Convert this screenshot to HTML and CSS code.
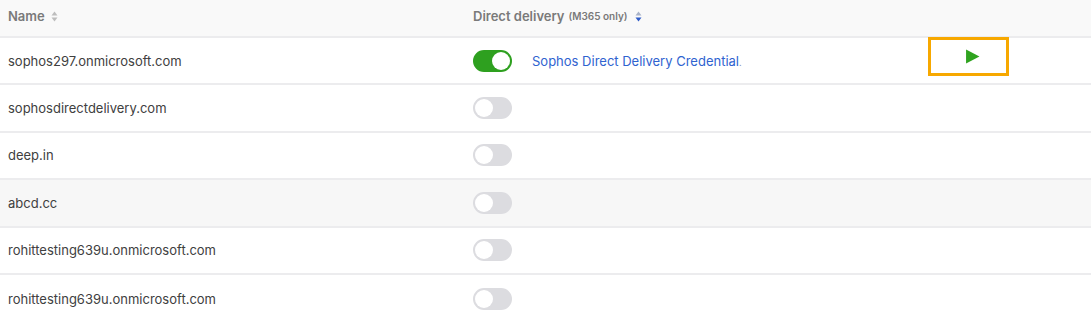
FILE: index.html
```html
<!DOCTYPE html>
<html>
<head>
<meta charset="utf-8">
<link rel="stylesheet" href="styles.css">
</head>
<body>
<div class="table">
  <div class="row head">
    <div class="c1"><span class="hlabel">Name</span>
      <svg class="sort" width="7" height="11" viewBox="0 0 7 11"><path d="M3.5 0.5L6.5 4.5H0.5Z" fill="#bdbdbd"/><path d="M3.5 10.5L6.5 6.5H0.5Z" fill="#bdbdbd"/></svg>
    </div>
    <div class="c2"><span class="hlabel">Direct delivery</span> <span class="small">(M365 only)</span>
      <svg class="sort" width="7" height="11" viewBox="0 0 7 11"><path d="M3.5 0.5L6.5 4.5H0.5Z" fill="#a9b3c9"/><path d="M3.5 10.5L6.5 6.5H0.5Z" fill="#2f5cc9"/></svg>
    </div>
  </div>
  <div class="row">
    <div class="c1">sophos297.onmicrosoft.com</div>
    <div class="c2"><span class="toggle on"><span class="knob"></span></span><a class="link">Sophos Direct Delivery Credential<span class="dot">.</span></a>
      <span class="action"><svg width="15" height="15" viewBox="0 0 14 14"><path d="M1 0.5L13.5 7L1 13.5Z" fill="#2fa31f"/></svg></span>
    </div>
  </div>
  <div class="row">
    <div class="c1">sophosdirectdelivery.com</div>
    <div class="c2"><span class="toggle"><span class="knob"></span></span></div>
  </div>
  <div class="row">
    <div class="c1">deep.in</div>
    <div class="c2"><span class="toggle"><span class="knob"></span></span></div>
  </div>
  <div class="row alt">
    <div class="c1">abcd.cc</div>
    <div class="c2"><span class="toggle"><span class="knob"></span></span></div>
  </div>
  <div class="row">
    <div class="c1">rohittesting639u.onmicrosoft.com</div>
    <div class="c2"><span class="toggle"><span class="knob"></span></span></div>
  </div>
  <div class="row last">
    <div class="c1">rohittesting639u.onmicrosoft.com</div>
    <div class="c2"><span class="toggle"><span class="knob"></span></span></div>
  </div>
</div>
</body>
</html>
```

FILE: styles.css
```css
* { box-sizing: border-box; }
html, body { margin: 0; padding: 0; background: #fff; }
body {
  font-family: Inter, "Noto Sans", "Liberation Sans", sans-serif;
  font-size: 13px;
  color: #404040;
}
.table { width: 1091px; }
.row {
  display: flex;
  align-items: center;
  height: 47.4px;
  border-bottom: 2px solid #ececee;
}
.row.head {
  height: 38px;
  background: #f9f9f9;
}
.row.alt { background: #f7f7f7; }
.row.last { border-bottom: none; }
.c1 {
  width: 473px;
  padding-left: 8px;
  display: flex;
  align-items: center;
  gap: 6px;
}
.c2 {
  flex: 1;
  display: flex;
  align-items: center;
}
.head .c1, .head .c2 { margin-top: -4px; }
.hlabel {
  font-weight: 600;
  color: #7a7a7a;
  font-size: 13px;
}
.small {
  font-size: 10px;
  font-weight: 600;
  color: #7a7a7a;
  margin-left: 4px;
  margin-right: 7px;
}
.sort { display: block; }
.toggle {
  width: 39px;
  height: 22px;
  border-radius: 11px;
  background: #dcdce0;
  position: relative;
  display: inline-block;
  flex: none;
}
.toggle .knob {
  position: absolute;
  left: 2px;
  top: 2px;
  width: 18px;
  height: 18px;
  border-radius: 50%;
  background: #fff;
}
.toggle.on { background: #2ea01f; }
.toggle.on .knob { left: 19px; }
.link {
  color: #2f63d0;
  margin-left: 20px;
  font-size: 13px;
}
.link .dot { font-size: 9px; color: #8a9cc0; }
.action {
  margin-left: 186px;
  width: 81px;
  height: 39px;
  border: 3px solid #f7a800;
  display: flex;
  align-items: center;
  justify-content: center;
  margin-top: -8px;
}
.action svg { margin-left: 8px; }
```
